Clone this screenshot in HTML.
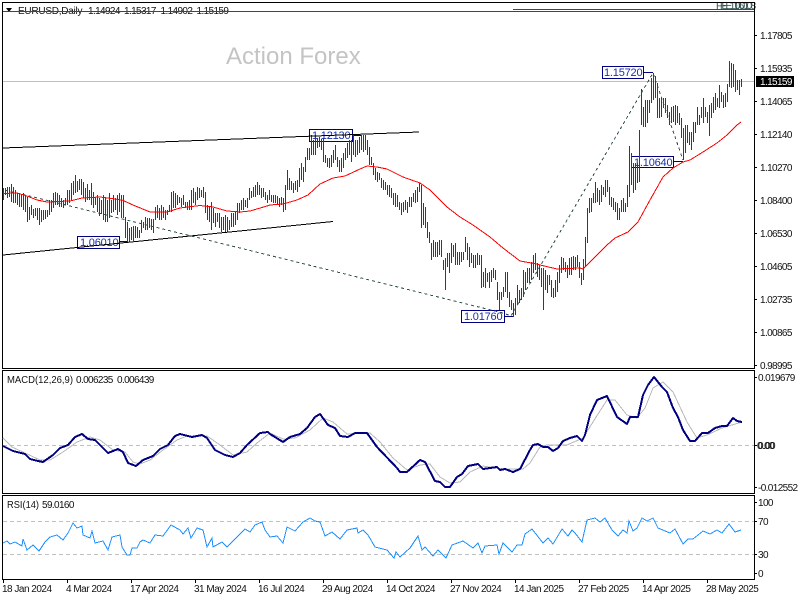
<!DOCTYPE html>
<html><head><meta charset="utf-8"><style>
html,body{margin:0;padding:0;background:#fff;width:800px;height:600px;overflow:hidden}
svg{display:block;position:absolute;left:0;top:0}
text{font-family:"Liberation Sans",sans-serif;font-size:10px;fill:#111}
.n{letter-spacing:-.62px}
.d{letter-spacing:-.5px}
.b{font-size:11px;fill:#1a2fb0;letter-spacing:-.2px}
</style></head><body>
<svg width="800" height="600" viewBox="0 0 800 600" xmlns="http://www.w3.org/2000/svg">
<rect width="800" height="600" fill="#fff"/>
<text x="226" y="64" style="font-size:24px;fill:#c4c4c4">Action Forex</text>
<path d="M3 81.5H754" stroke="#c0c0c0" fill="none" shape-rendering="crispEdges"/>
<g fill="none" stroke="#000080" shape-rendering="crispEdges">
<rect x="309.5" y="129.5" width="43" height="12"/><path d="M352 135.5H362"/>
<rect x="77.5" y="236.5" width="42" height="12"/><path d="M119 241.5H128"/>
<rect x="461.5" y="310.5" width="43" height="12"/><path d="M504 316.5H513"/>
<rect x="602.5" y="66.5" width="41" height="12"/><path d="M643 72.5H653"/>
<rect x="631.5" y="156.5" width="42" height="11"/><path d="M673 161.5H683"/>
</g>
<text class="b" x="312" y="139">1.12130</text>
<text class="b" x="80" y="246">1.06010</text>
<text class="b" x="464" y="320">1.01760</text>
<text class="b" x="604" y="76">1.15720</text>
<text class="b" x="634" y="166">1.10640</text>
<path transform="translate(.5,0)" shape-rendering="crispEdges" stroke="#0e4a68" fill="none" d="M3 188V200M5 188V195M7 187V198M9 187V197M11 184V202M13 187V203M15 190V203M17 193V205M19 193V207M21 194V207M23 193V210M25 195V212M27 197V222M29 207V220M31 205V215M33 209V218M35 208V216M37 208V220M39 208V225M41 210V222M43 210V220M45 210V219M47 210V217M49 200V215M51 200V212M53 193V208M55 192V205M57 193V205M59 195V207M61 198V207M63 200V208M65 198V205M67 190V205M69 190V203M71 183V200M73 181V195M75 175V193M77 181V192M79 179V190M81 179V195M83 182V198M85 188V202M87 184V200M89 190V200M91 183V205M93 192V208M95 197V205M97 195V212M99 198V216M101 200V214M103 195V220M105 197V222M107 200V222M109 193V218M111 200V213M113 195V212M115 198V210M117 195V215M119 193V212M121 195V218M123 195V218M125 217V238M127 222V242M129 228V242M131 227V240M133 226V241M135 226V238M137 227V238M139 230V238M141 220V233M143 222V228M145 217V230M147 218V230M149 218V228M151 219V230M153 219V233M155 207V220M157 205V218M159 208V220M161 205V220M163 207V218M165 210V220M167 210V215M169 205V212M171 192V212M173 191V208M175 193V208M177 195V205M179 197V203M181 198V207M183 195V205M185 202V208M187 202V210M189 200V210M191 190V210M193 188V203M195 192V205M197 187V200M199 188V198M201 190V197M203 187V198M205 192V213M207 205V220M209 207V222M211 202V230M213 208V223M215 213V227M217 213V222M219 213V228M221 217V232M223 217V230M225 215V232M227 217V232M229 220V230M231 213V227M233 213V227M235 212V225M237 203V220M239 203V213M241 200V210M243 198V210M245 200V207M247 198V208M249 188V200M251 191V198M253 187V197M255 185V197M257 182V195M259 185V195M261 188V198M263 188V197M265 192V200M267 195V203M269 190V200M271 195V202M273 195V203M275 195V203M277 196V205M279 198V207M281 197V205M283 198V212M285 185V210M287 170V190M289 178V190M291 181V190M293 183V193M295 181V190M297 180V192M299 168V187M301 163V180M303 167V182M305 157V172M307 148V160M309 148V160M311 135V155M313 140V155M315 135V155M317 138V148M319 137V147M321 139V150M323 138V162M325 155V163M327 158V167M329 158V168M331 155V167M333 150V163M335 145V160M337 157V167M339 160V172M341 158V172M343 153V168M345 148V160M347 143V158M349 140V155M351 140V162M353 135V155M355 140V157M357 140V155M359 137V153M361 135V150M363 135V152M365 135V150M367 140V155M369 147V165M371 157V165M373 163V175M375 168V180M377 172V182M379 173V180M381 178V188M383 180V190M385 182V190M387 185V195M389 185V197M391 188V198M393 193V205M395 193V207M397 195V207M399 202V210M401 203V215M403 202V212M405 200V210M407 202V213M409 197V207M411 197V207M413 193V202M415 190V203M417 187V202M419 183V192M421 185V228M423 203V225M425 207V228M427 222V238M429 232V243M431 243V260M433 240V257M435 242V257M437 242V257M439 240V255M441 240V257M443 260V270M445 258V290M447 253V267M449 253V273M451 243V263M453 245V257M455 243V265M457 252V265M459 252V265M461 252V262M463 252V260M465 237V252M467 243V260M469 247V267M471 253V263M473 255V268M475 255V268M477 253V265M479 255V265M481 255V288M483 272V287M485 268V288M487 273V282M489 272V288M491 270V282M493 268V278M495 270V280M497 282V300M499 292V310M501 292V300M503 287V297M505 272V292M507 272V298M509 292V307M511 300V310M513 303V317M515 298V315M517 285V305M519 290V303M521 288V300M523 270V297M525 272V290M527 268V283M529 268V283M531 262V280M533 255V273M535 253V270M537 263V277M539 265V280M541 268V287M543 268V310M545 270V290M547 275V293M549 275V285M551 280V297M553 288V298M555 280V297M557 272V292M559 265V283M561 257V273M563 258V270M565 262V272M567 265V278M569 258V275M571 257V275M573 256V270M575 257V270M577 255V267M579 262V278M581 273V285M583 259V280M585 237V267M587 208V243M589 198V213M591 198V212M593 193V203M595 182V203M597 188V202M599 190V205M601 185V202M603 187V195M605 180V197M607 180V192M609 187V205M611 197V207M613 198V210M615 202V212M617 203V220M619 208V220M621 200V212M623 198V212M625 203V212M627 185V207M629 146V197M631 153V185M633 163V193M635 163V190M637 163V183M639 130V182M641 89V125M643 107V127M645 100V127M647 100V123M649 100V113M651 78V103M653 73V100M655 76V98M657 83V118M659 98V118M661 98V117M663 98V108M665 98V113M667 105V118M669 112V125M671 107V123M673 106V122M675 105V125M677 106V123M679 113V125M681 118V138M683 128V160M685 125V153M687 125V143M689 132V145M691 132V150M693 122V142M695 122V133M697 107V125M699 115V125M701 107V118M703 98V123M705 107V117M707 112V123M709 105V136M711 103V118M713 97V113M715 93V110M717 98V107M719 85V108M721 92V102M723 95V108M725 93V107M727 84V102M729 61V87M731 63V88M733 64V87M735 70V92M737 80V90M739 80V95M741 79V87"/>
<g fill="none" stroke-linejoin="round" shape-rendering="crispEdges">
<path stroke="#000" d="M3 148L419 132"/>
<path stroke="#000" d="M3 255L333 221.5"/>
<path stroke="#2f4f4f" stroke-dasharray="3 3" d="M5 190L503 313L511 316L653 73L683 160"/>
<path stroke="#f00" d="M3 193.5L17 193L27 196L37 200L47 202L70 201L82 198L100 197L122 200L133 205L150 212L167 212L180 208L200 205.5L213 207L227 211L240 212L250 211L267 206L270 205L283 204L297 200L308 195L320 184L333 178L345 176L360 169L367 166L377 167L387 169L403 177L420 183L430 190L447 207L460 217L473 225L490 237L503 248L520 261L537 264L540 265L557 269L580 268L583 269L607 245L615 238L628 232L638 222L650 200L663 177L673 168L683 162L690 160L703 152L717 143L727 135L737 125L741 122"/>
</g>
<path d="M6 8H12L9 12Z" fill="#000"/>
<text x="18" y="14" style="letter-spacing:-.25px">EURUSD,Daily</text>
<text class="n" x="88" y="14">1.14924</text>
<text class="n" x="124" y="14">1.15317</text>
<text class="n" x="160.5" y="14">1.14902</text>
<text class="n" x="196.5" y="14">1.15159</text>
<text class="n" x="716" y="9" style="fill:#2f4f4f">FE 100.0</text>
<text class="n" x="720" y="9" style="fill:#2f4f4f">FE 161.8</text>
<g fill="none" stroke="#000" shape-rendering="crispEdges">
<path stroke="#2f4f4f" d="M3 11.5H754M513 9.5H754"/>
<rect x="2.5" y="2.5" width="752" height="366"/>
<rect x="2.5" y="370.5" width="752" height="123"/>
<rect x="2.5" y="495.5" width="752" height="84"/>
<path d="M754 35.5H757M754 68.5H757M754 101.5H757M754 134.5H757M754 167.5H757M754 200.5H757M754 233.5H757M754 266.5H757M754 299.5H757M754 332.5H757M754 365.5H757M754 377.5H757M754 445.5H757M754 487.5H757M754 502.5H757M754 521.5H757M754 554.5H757M754 573.5H757"/>
<path d="M3.5 579V583M67.5 579V583M131.5 579V583M195.5 579V583M259.5 579V583M323.5 579V583M387.5 579V583M451.5 579V583M515.5 579V583M579.5 579V583M643.5 579V583M707.5 579V583"/>
</g>
<text class="n" x="760" y="39">1.17805</text>
<text class="n" x="760" y="72">1.15935</text>
<text class="n" x="760" y="105">1.14065</text>
<text class="n" x="760" y="138">1.12140</text>
<text class="n" x="760" y="171">1.10270</text>
<text class="n" x="760" y="204">1.08400</text>
<text class="n" x="760" y="237">1.06530</text>
<text class="n" x="760" y="270">1.04605</text>
<text class="n" x="760" y="303">1.02735</text>
<text class="n" x="760" y="336">1.00865</text>
<text class="n" x="760" y="369">0.98995</text>
<rect x="756" y="76" width="38" height="11" fill="#000"/>
<text class="n" x="760" y="85" style="fill:#fff">1.15159</text>
<path fill="none" stroke="#c0c0c0" stroke-dasharray="4 3" d="M3 445.5H754M3 521.5H754M3 554.5H754" shape-rendering="crispEdges"/>
<path fill="none" stroke="#b8b8b8" shape-rendering="crispEdges" d="M3 438L12 447L25 453L40 460L50 460L63 452L77 442L90 437L100 440L113 450L125 452L133 462L140 464L150 460L163 450L177 440L187 436L207 436L220 445L233 455L247 452L257 443L270 433L283 439L295 438L310 430L323 418L333 422L347 434L370 433L380 442L393 458L407 470L420 465L430 464L440 477L450 483L460 482L470 472L483 466L503 469L523 469L530 463L540 447L547 445L567 445L583 438L593 422L607 400L615 400L627 415L637 418L645 408L653 388L663 382L673 392L687 422L697 438L707 435L722 428L742 422"/>
<path fill="none" stroke="#000080" stroke-width="2" stroke-linejoin="round" shape-rendering="crispEdges" d="M3 446L13 451L25 454L30 459L38 461L43 462L53 455L60 448L68 445L75 437L82 434L88 439L95 440L108 453L118 449L123 452L128 463L136 466L143 460L153 456L160 449L168 445L175 436L180 434L192 437L202 435L207 438L215 450L225 455L233 457L240 453L247 445L260 433L268 432L270 434L283 442L290 437L300 434L307 428L315 417L320 414L328 425L335 428L340 436L348 437L355 433L367 433L377 447L397 468L400 472L407 472L420 460L425 462L435 481L440 482L445 487L450 487L457 477L462 474L468 466L478 464L483 469L497 467L500 470L505 469L513 472L520 469L530 450L533 445L538 444L543 447L548 447L553 451L558 448L563 441L570 438L577 436L582 441L585 435L590 415L597 400L607 396L617 417L627 424L630 417L638 417L643 395L648 385L654 377L662 387L667 392L673 408L678 417L683 430L690 441L695 441L702 433L708 433L715 428L722 426L727 426L733 418L737 421L742 422"/>
<path fill="none" stroke="#1e90ff" shape-rendering="crispEdges" d="M3 543L7 541L10 544L15 542L22 546L23 539L27 550L33 545L39 551L45 542L50 537L57 535L63 540L68 533L73 523L77 528L82 526L83 535L90 538L92 531L95 543L103 541L108 550L112 537L120 535L122 547L127 555L130 555L132 548L137 548L140 542L143 540L150 543L155 535L163 536L171 525L180 530L183 534L188 528L191 538L197 528L203 530L207 547L212 538L213 547L222 542L227 547L232 542L245 529L250 532L255 525L262 522L265 530L270 537L277 536L283 543L287 527L295 531L303 522L310 518L315 521L320 522L325 536L332 532L340 539L347 530L357 528L358 533L363 530L368 535L375 547L387 550L394 558L396 552L400 557L410 548L418 536L422 550L425 547L433 556L438 550L446 558L452 545L463 541L473 548L478 543L482 553L485 546L497 545L499 554L503 543L512 552L517 545L522 545L525 534L532 529L543 543L548 538L553 544L562 529L568 536L572 530L575 533L582 542L587 520L595 518L600 522L605 518L612 530L618 536L623 530L627 533L629 521L633 531L637 528L642 518L647 521L653 518L658 528L670 533L675 529L683 544L688 539L693 539L703 531L710 534L717 530L722 533L729 524L735 532L741 530"/>
<text x="7" y="383" textLength="66" lengthAdjust="spacingAndGlyphs">MACD(12,26,9)</text>
<text class="n" x="76" y="383">0.006235</text>
<text class="n" x="117" y="383">0.006439</text>
<text x="7" y="508" textLength="32" lengthAdjust="spacingAndGlyphs">RSI(14)</text>
<text class="n" x="42" y="508">59.0160</text>
<text class="n" x="758" y="381">0.019679</text>
<text class="n" x="757" y="449">0.00</text>
<text class="n" x="758" y="449">0.00</text>
<text class="n" x="758" y="491">-0.012552</text>
<text class="n" x="758" y="506">100</text>
<text class="n" x="758" y="525">70</text>
<text class="n" x="758" y="558">30</text>
<text class="n" x="758" y="577">0</text>
<text class="d" x="2" y="592">18 Jan 2024</text>
<text class="d" x="66" y="592">4 Mar 2024</text>
<text class="d" x="130" y="592">17 Apr 2024</text>
<text class="d" x="194" y="592">31 May 2024</text>
<text class="d" x="258" y="592">16 Jul 2024</text>
<text class="d" x="322" y="592">29 Aug 2024</text>
<text class="d" x="386" y="592">14 Oct 2024</text>
<text class="d" x="450" y="592">27 Nov 2024</text>
<text class="d" x="514" y="592">14 Jan 2025</text>
<text class="d" x="578" y="592">27 Feb 2025</text>
<text class="d" x="642" y="592">14 Apr 2025</text>
<text class="d" x="706" y="592">28 May 2025</text>
</svg>
</body></html>
